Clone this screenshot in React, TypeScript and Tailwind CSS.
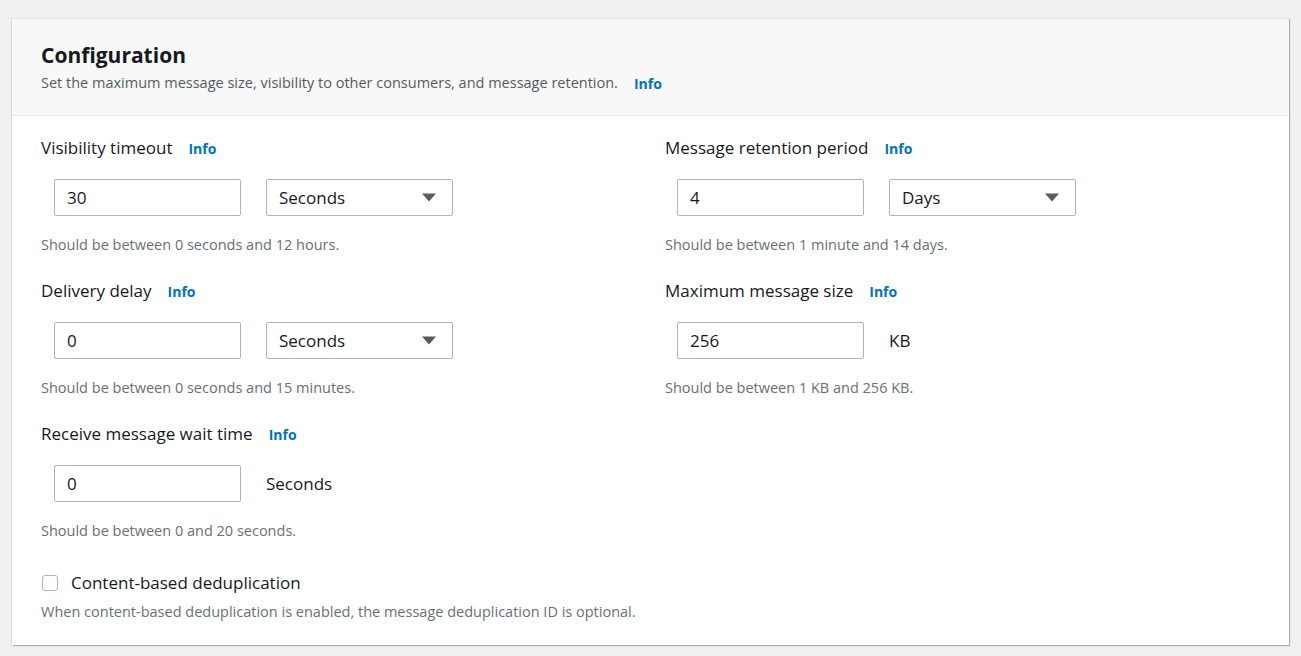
import React from 'react';

const font = { fontFamily: '"Open Sans", "Noto Sans", Arial, sans-serif' };

function Info() {
  return <span className="ml-[16px] text-[14px] font-bold text-[#0073bb]">Info</span>;
}

function Caret() {
  return (
    <svg width="14" height="9" viewBox="0 0 14 9" className="shrink-0">
      <path d="M0 0.5 L14 0.5 L7 8.5 Z" fill="#545b64" />
    </svg>
  );
}

interface FieldProps {
  label: string;
  value: string;
  unit: string;
  select?: boolean;
  hint: string;
  indent: string;
}

function Field({ label, value, unit, select, hint, indent }: FieldProps) {
  return (
    <div className="flex flex-col">
      <div className="flex items-center h-6 text-[17px] text-[#16191f]">
        {label}
        <Info />
      </div>
      <div className={`mt-[19px] flex items-center gap-[25px] ${indent}`}>
        <div className="w-[187px] h-[37px] border border-[#aab7b8] rounded-[2px] flex items-center px-3 text-[17px] text-[#16191f] bg-white">
          {value}
        </div>
        {select ? (
          <div className="w-[187px] h-[37px] border border-[#aab7b8] rounded-[2px] flex items-center justify-between pl-3 pr-4 text-[17px] text-[#16191f] bg-white">
            <span>{unit}</span>
            <Caret />
          </div>
        ) : (
          <span className="text-[17px] text-[#16191f]">{unit}</span>
        )}
      </div>
      <div className="mt-[19px] h-5 flex items-center text-[14.5px] text-[#687078]">{hint}</div>
    </div>
  );
}

export default function App() {
  return (
    <div className="min-h-[656px] bg-[#f0f0f0] pt-[18px] px-[12px] pb-[11px]" style={font}>
      <div className="bg-white border-t border-[#e6e6e6] shadow-[1px_1px_1px_0_rgba(0,28,36,0.3),-1px_0_0_0_rgba(0,28,36,0.1)]">
        <div className="bg-[#f7f8f7] border-b border-[#e6e8e8] px-[29px] pt-[22px] pb-[19px]">
          <h2 className="text-[21px] leading-7 font-bold text-[#16191f]">Configuration</h2>
          <p className="mt-[1px] h-[26px] flex items-center text-[14.5px] text-[#545b64]">
            Set the maximum message size, visibility to other consumers, and message retention.
            <Info />
          </p>
        </div>
        <div className="px-[29px] pt-[20px] pb-[23px]">
          <div className="grid grid-cols-2 gap-x-[29px] gap-y-[24px]">
            <Field indent="pl-[13px]" label="Visibility timeout" value="30" unit="Seconds" select hint="Should be between 0 seconds and 12 hours." />
            <Field indent="pl-[12px]" label="Message retention period" value="4" unit="Days" select hint="Should be between 1 minute and 14 days." />
            <Field indent="pl-[13px]" label="Delivery delay" value="0" unit="Seconds" select hint="Should be between 0 seconds and 15 minutes." />
            <Field indent="pl-[12px]" label="Maximum message size" value="256" unit="KB" hint="Should be between 1 KB and 256 KB." />
            <Field indent="pl-[13px]" label="Receive message wait time" value="0" unit="Seconds" hint="Should be between 0 and 20 seconds." />
          </div>
          <label className="mt-[30px] flex items-center h-6 gap-[13px] text-[17px] text-[#16191f]">
            <span className="ml-[1px] w-4 h-4 border border-[#aab7b8] rounded-[3px] bg-white" />
            Content-based deduplication
          </label>
          <div className="mt-[7px] h-5 flex items-center text-[14.5px] text-[#687078]">
            When content-based deduplication is enabled, the message deduplication ID is optional.
          </div>
        </div>
      </div>
    </div>
  );
}
